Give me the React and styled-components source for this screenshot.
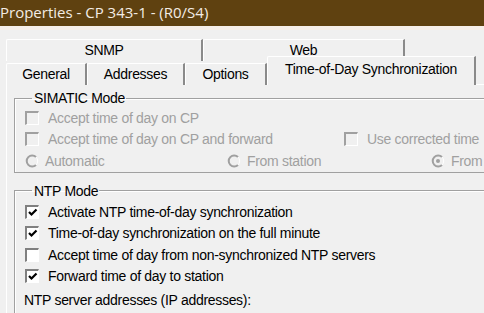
import React from 'react';
import styled, { createGlobalStyle } from 'styled-components';

const GlobalStyle = createGlobalStyle`
  html, body {
    margin: 0;
    padding: 0;
    background: #f0f0f0;
  }
  body {
    width: 484px;
    height: 313px;
    overflow: hidden;
  }
`;

const Window = styled.div`
  width: 484px;
  height: 313px;
  overflow: hidden;
  background: #f0f0f0;
  font-family: 'Liberation Sans', Arial, sans-serif;
  font-size: 14px;
  letter-spacing: -0.3px;
  color: #000;
`;

const TitleBar = styled.div`
  height: 26px;
  background: #5f4110;
  color: #f3ece4;
  font-family: 'Open Sans', 'Noto Sans', sans-serif;
  font-size: 15px;
  letter-spacing: 0;
  line-height: 24px;
  white-space: nowrap;
`;

const Strip = styled.div`
  height: 4px;
  background: #f7efe9;
`;

const Body = styled.div`
  padding: 9px 0 0 6px;
`;

const TabRow = styled.div`
  display: flex;
  align-items: flex-end;
  height: ${p => p.$h}px;
`;

const Tab = styled.div`
  box-sizing: border-box;
  width: ${p => p.$w}px;
  height: ${p => (p.$active ? 29 : 22)}px;
  margin-top: ${p => (p.$active ? -4 : 0)}px;
  border-top: 1px solid #fff;
  border-left: 1px solid #fff;
  border-right: 2px solid #8a8a8a;
  border-top-left-radius: 2px;
  background: #f0f0f0;
  display: flex;
  align-items: center;
  justify-content: center;
  padding-bottom: ${p => (p.$active ? 5 : 2)}px;
  white-space: nowrap;
  position: relative;
  z-index: ${p => (p.$active ? 2 : 1)};
`;

const Panel = styled.div`
  border-top: 1px solid #fff;
  border-left: 1px solid #fff;
  padding: 5px 0 0 7px;
  margin-top: -1px;
`;

const Group = styled.fieldset`
  margin: 0 0 ${p => p.$mb || 0}px 0;
  padding: ${p => p.$pt}px 0 0 10px;
  border: 1px solid #a0a0a0;
  border-right: none;
  box-shadow: inset 1px 1px 0 #fff;
  border-radius: 0;
  min-width: 0;
`;

const Legend = styled.legend`
  padding: 0 1px 0 2px;
  margin-left: 7px;
  line-height: 16px;
`;

const Row = styled.div`
  display: flex;
  align-items: center;
  height: 21.6px;
`;

const Item = styled.div`
  display: flex;
  align-items: center;
  width: ${p => (p.$w ? `${p.$w}px` : 'auto')};
  flex: none;
  white-space: nowrap;
  color: ${p => (p.$disabled ? '#a0a0a0' : '#000')};
`;

const Box = styled.span`
  box-sizing: border-box;
  width: 14px;
  height: 14px;
  flex: none;
  margin-right: 9px;
  border-top: 2px solid ${p => (p.$disabled ? '#a0a0a0' : '#808080')};
  border-left: 2px solid ${p => (p.$disabled ? '#a0a0a0' : '#808080')};
  border-right: 1px solid #fff;
  border-bottom: 1px solid #fff;
  background: ${p => (p.$disabled ? '#f0f0f0' : '#fff')};
  display: flex;
  align-items: center;
  justify-content: center;
`;

const Label = styled.div`
  height: 26px;
  display: flex;
  align-items: center;
  margin-left: -1px;
  white-space: nowrap;
`;

function Check({ checked, disabled }) {
  return (
    <Box $disabled={disabled}>
      {checked && (
        <svg width="10" height="9" viewBox="0 0 10 9">
          <path d="M1 4 L3.5 6.5 L8.5 1.5" fill="none" stroke="#000" strokeWidth="2.2" />
        </svg>
      )}
    </Box>
  );
}

function Radio({ selected }) {
  return (
    <svg width="14" height="14" viewBox="0 0 14 14" style={{ marginRight: 6, flex: 'none' }}>
      <path d="M11 3 A5.5 5.5 0 1 0 11 11" fill="none" stroke="#a0a0a0" strokeWidth="2" />
      <path d="M11 3 A5.5 5.5 0 0 1 11 11" fill="none" stroke="#fff" strokeWidth="1" />
      {selected && <circle cx="7" cy="7" r="2" fill="#a0a0a0" />}
    </svg>
  );
}

export default function App() {
  return (
    <Window>
      <GlobalStyle />
      <TitleBar>Properties - CP 343-1 - (R0/S4)</TitleBar>
      <Strip />
      <Body>
        <TabRow $h={22}>
          <Tab $w={197}>SNMP</Tab>
          <Tab $w={202}>Web</Tab>
        </TabRow>
        <TabRow $h={24}>
          <Tab $w={81}>General</Tab>
          <Tab $w={98}>Addresses</Tab>
          <Tab $w={82}>Options</Tab>
          <Tab $w={209} $active>Time-of-Day Synchronization</Tab>
        </TabRow>
        <Panel>
          <Group $pt={1} $mb={10}>
            <Legend>SIMATIC Mode</Legend>
            <Row>
              <Item $disabled><Check disabled />Accept time of day on CP</Item>
            </Row>
            <Row>
              <Item $disabled $w={319}><Check disabled />Accept time of day on CP and forward</Item>
              <Item $disabled><Check disabled />Use corrected time</Item>
            </Row>
            <Row>
              <Item $disabled $w={202}><Radio />Automatic</Item>
              <Item $disabled $w={204}><Radio />From station</Item>
              <Item $disabled><Radio selected />From</Item>
            </Row>
          </Group>
          <Group $pt={2}>
            <Legend>NTP Mode</Legend>
            <Row>
              <Item><Check checked />Activate NTP time-of-day synchronization</Item>
            </Row>
            <Row>
              <Item><Check checked />Time-of-day synchronization on the full minute</Item>
            </Row>
            <Row>
              <Item><Check />Accept time of day from non-synchronized NTP servers</Item>
            </Row>
            <Row>
              <Item><Check checked />Forward time of day to station</Item>
            </Row>
            <Label>NTP server addresses (IP addresses):</Label>
          </Group>
        </Panel>
      </Body>
    </Window>
  );
}
